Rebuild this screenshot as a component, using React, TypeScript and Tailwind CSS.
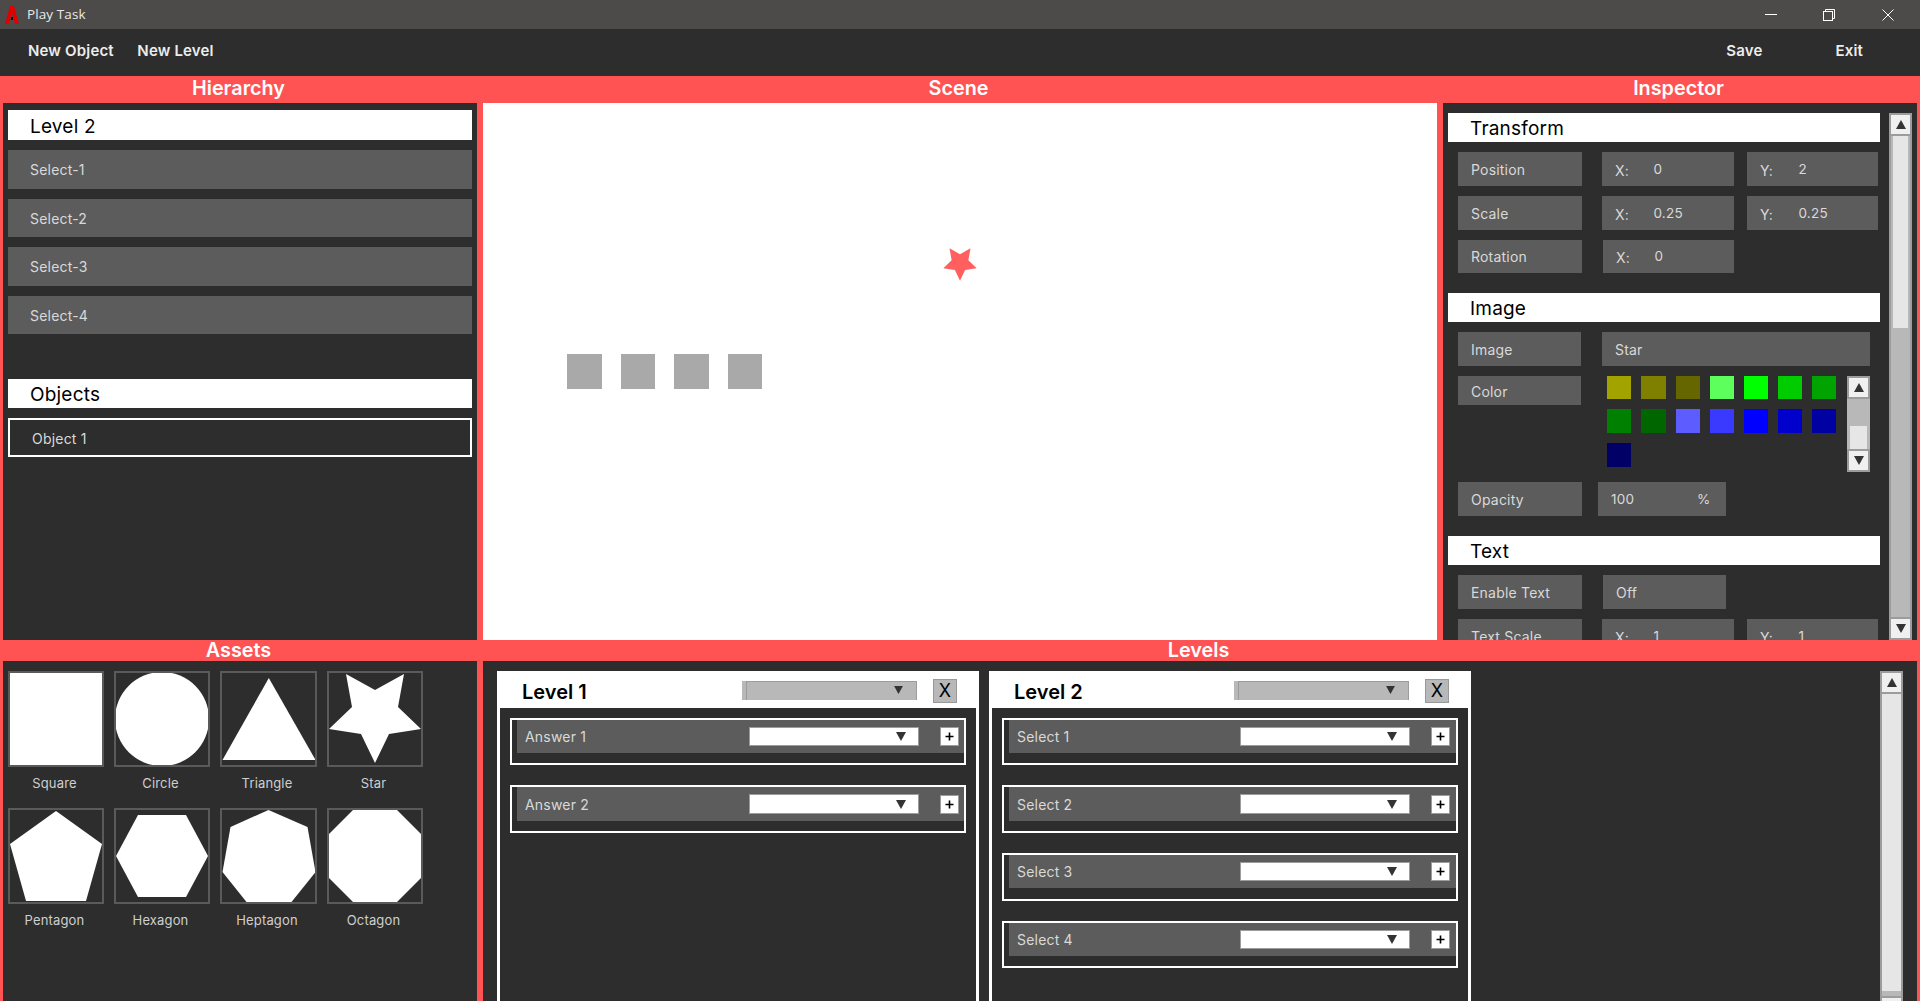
import React from "react";

const font = { fontFamily: "Inter, 'Noto Sans', sans-serif" };

function Tri({ down = false, cls = "" }: { down?: boolean; cls?: string }) {
  return (
    <svg viewBox="0 0 10 9" className={cls}>
      <polygon points={down ? "0,0 10,0 5,9" : "5,0 10,9 0,9"} fill="#333333" />
    </svg>
  );
}

function ScrollBtn({ down = false }: { down?: boolean }) {
  return (
    <div className="w-full h-[23px] shrink-0 bg-[#f0f0f0] border-2 border-[#9c9c9c] flex items-center justify-center">
      <Tri down={down} cls="w-[10px] h-[9px]" />
    </div>
  );
}

function SectionBar({ children, h = "h-[29px]", pl = "pl-[22px]", cls = "", lh = "leading-[32px]" }: { children: React.ReactNode; h?: string; pl?: string; cls?: string; lh?: string }) {
  return (
    <div className={`${h} ${pl} ${cls} ${lh} bg-white text-black text-[19px] tracking-[0.2px]`}>{children}</div>
  );
}

function Cell({ w, h = "h-[34px]", ml = "", children }: { w: string; h?: string; ml?: string; children?: React.ReactNode }) {
  return (
    <div className={`${w} ${h} ${ml} bg-[#5c5c5c] text-[#d9d9d9] text-[14px] flex items-center pl-[13px] shrink-0 tracking-[0.2px]`}>{children}</div>
  );
}

function XY({ a, v, w, ml }: { a: string; v: string; w: string; ml: string }) {
  return (
    <Cell w={w} ml={ml}>
      <span className="w-[38.5px] text-[14px] translate-y-px">{a}</span>
      <span className="text-[13.5px]">{v}</span>
    </Cell>
  );
}

function InspRow({ label, children, mb = "mb-[10px]", h = "h-[34px]", w = "w-[124px]" }: { label: string; children?: React.ReactNode; mb?: string; h?: string; w?: string }) {
  return (
    <div className={`flex ml-[10px] ${mb}`}>
      <Cell w={w} h={h}>{label}</Cell>
      {children}
    </div>
  );
}

const swatches = [
  ["#a3a300", "#808000", "#666600", "#5cff5c", "#00ff00", "#00cc00", "#00a300"],
  ["#008000", "#006600", "#5c5cff", "#3a3aff", "#0000ff", "#0000cc", "#0000a3"],
  ["#000066"],
];

function Hierarchy() {
  return (
    <div className="w-[474px] bg-[#2d2d2d] pt-[7px] px-[5px] flex flex-col text-[14px]">
      <SectionBar h="h-[30px]" lh="leading-[34px]">Level 2</SectionBar>
      <div className="flex flex-col gap-[10px] mt-[10px]">
        {["Select-1", "Select-2", "Select-3", "Select-4"].map((s, i) => (
          <div key={s} className={`${i % 2 === 0 ? "h-[39px]" : "h-[38px]"} bg-[#5c5c5c] text-[#d9d9d9] pl-[22px] flex items-center tracking-[0.2px]`}>{s}</div>
        ))}
      </div>
      <SectionBar cls="mt-[45px]">Objects</SectionBar>
      <div className="mt-[10px] h-[39px] border-2 border-white pl-[22px] pt-[2px] text-[#d9d9d9] flex items-center tracking-[0.2px]">Object 1</div>
    </div>
  );
}

function Scene() {
  return (
    <div className="relative flex-1 bg-white">
      <div className="absolute left-[84px] top-[251px] flex gap-[19.1px]">
        {[0, 1, 2, 3].map((i) => (
          <div key={i} className="w-[34.5px] h-[35px] bg-[#a9a9a9]" />
        ))}
      </div>
      <svg viewBox="0 0 92 91" className="absolute left-[460px] top-[145px] w-[34px] h-[33px]">
        <polygon points="17,1 46,17 75,1 69,34 92,56 60,61 46,90 32,61 0,56 23,34" fill="#ff5f5f" />
      </svg>
    </div>
  );
}

function Inspector() {
  return (
    <div className="w-[474px] h-[537px] overflow-hidden bg-[#2d2d2d] flex pl-[5px] pr-[5px] pt-[10px]">
      <div className="w-[432px] shrink-0 flex flex-col">
        <SectionBar cls="mb-[10px]">Transform</SectionBar>
        <InspRow label="Position">
          <XY a="X:" v="0" w="w-[132px]" ml="ml-[20px]" />
          <XY a="Y:" v="2" w="w-[131px]" ml="ml-[13px]" />
        </InspRow>
        <InspRow label="Scale">
          <XY a="X:" v="0.25" w="w-[132px]" ml="ml-[20px]" />
          <XY a="Y:" v="0.25" w="w-[131px]" ml="ml-[13px]" />
        </InspRow>
        <InspRow label="Rotation" h="h-[33px]" mb="mb-[20px]">
          <Cell w="w-[131px]" h="h-[33px]" ml="ml-[21px]">
            <span className="w-[38.5px] translate-y-px">X:</span>
            <span className="text-[13.5px]">0</span>
          </Cell>
        </InspRow>
        <SectionBar cls="mb-[10px]">Image</SectionBar>
        <InspRow label="Image" w="w-[123px]">
          <Cell w="w-[268px]" ml="ml-[21px]">Star</Cell>
        </InspRow>
        <div className="flex ml-[10px] h-[96px] mb-[10px]">
          <div className="w-[123px] h-[29px] bg-[#5c5c5c] text-[#d9d9d9] text-[14px] pl-[13px] pt-[1px] flex items-center shrink-0 tracking-[0.2px]">Color</div>
          <div className="ml-[26px] w-[229px] shrink-0 flex flex-col gap-[10px]">
            {swatches.map((r, i) => (
              <div key={i} className={`flex gap-[10px] ${i === 0 ? "h-[23px]" : "h-[24px]"}`}>
                {r.map((c, j) => (
                  <div key={c} className={`${j === 1 ? "w-[25px]" : "w-[24px]"} h-full`} style={{ backgroundColor: c }} />
                ))}
              </div>
            ))}
          </div>
          <div className="w-[23px] h-[96px] ml-[11px] flex flex-col bg-[#b8b8b8]">
            <ScrollBtn />
            <div className="flex-1 flex flex-col justify-end px-[3px]">
              <div className="h-[23px] bg-[#e6e6e6]" />
            </div>
            <ScrollBtn down />
          </div>
        </div>
        <InspRow label="Opacity" mb="mb-[20px]">
          <Cell w="w-[128px]" ml="ml-[16px]">
            <span className="text-[13.5px] w-[86px]">100</span>
            <span className="text-[13.5px]">%</span>
          </Cell>
        </InspRow>
        <SectionBar cls="mb-[10px]">Text</SectionBar>
        <InspRow label="Enable Text">
          <Cell w="w-[123px]" ml="ml-[21px]">Off</Cell>
        </InspRow>
        <InspRow label="Text Scale">
          <XY a="X:" v="1" w="w-[132px]" ml="ml-[20px]" />
          <XY a="Y:" v="1" w="w-[131px]" ml="ml-[13px]" />
        </InspRow>
      </div>
      <div className="ml-[9px] w-[23px] h-[527px] flex flex-col bg-[#b8b8b8] border-x-2 border-[#9c9c9c]">
        <div className="-mx-[2px]"><div className="w-[23px]"><ScrollBtn /></div></div>
        <div className="flex-1 px-[2px]">
          <div className="h-[192px] bg-[#e6e6e6]" />
        </div>
        <div className="-mx-[2px]"><div className="w-[23px]"><ScrollBtn down /></div></div>
      </div>
    </div>
  );
}

function Shape({ points, circle }: { points?: string; circle?: boolean }) {
  return (
    <svg viewBox="0 0 92 92" className="w-full h-full block">
      {circle ? <circle cx="46" cy="46" r="47" fill="#fff" /> : <polygon points={points} fill="#fff" />}
    </svg>
  );
}

const assets: { n: string; p?: string; c?: boolean }[] = [
  { n: "Square", p: "0,0 92,0 92,92 0,92" },
  { n: "Circle", c: true },
  { n: "Triangle", p: "46.3,5 93,87 0,87" },
  { n: "Star", p: "17,1 46,17 75,1 69,34 92,56 60,61 46,90 32,61 0,56 23,34" },
  { n: "Pentagon", p: "46,1 92,34 76,91 16,91 0,34" },
  { n: "Hexagon", p: "22,5 70,5 92,46 70,87 22,87 0,46" },
  { n: "Heptagon", p: "46,0 85,17 93,62 69,92 24,92 0,62 8,17" },
  { n: "Octagon", p: "24,0 68,0 92,24 92,68 68,92 24,92 0,68 0,24" },
];

function Assets() {
  return (
    <div className="w-[474px] bg-[#2d2d2d] pt-[10px] pl-[5px]">
      <div className="grid grid-cols-[96px_96px_97px_96px] gap-x-[10px] gap-y-[41px] w-fit">
        {assets.map((a) => (
          <div key={a.n} className="relative h-[96px]">
            <div className="w-full h-full border-2 border-[#5a5a5a]">
              <Shape points={a.p} circle={a.c} />
            </div>
            <div className="absolute left-0 right-[3px] top-[102px] text-center text-[13px] leading-[20px] text-[#cfcfcf] tracking-[0.15px]">{a.n}</div>
          </div>
        ))}
      </div>
    </div>
  );
}

function Plus() {
  return (
    <div className="w-[19px] h-[19px] ml-[21px] shrink-0 bg-white border border-[#9c9c9c] flex items-center justify-center">
      <svg viewBox="0 0 9 9" className="w-[9px] h-[9px]">
        <path d="M4.5 0.5v8M0.5 4.5h8" stroke="#000" strokeWidth="1.6" fill="none" />
      </svg>
    </div>
  );
}

function Card({ title, rows, ml = "", labelW = "w-[224px]" }: { title: string; rows: string[]; ml?: string; labelW?: string }) {
  return (
    <div className={`w-[482px] shrink-0 bg-white px-[3px] flex flex-col ${ml}`}>
      <div className="h-[37px] shrink-0 flex items-start">
        <span className="ml-[22px] mt-[7px] leading-[28px] text-[20px] font-semibold text-black w-[220px] shrink-0">{title}</span>
        <div className="w-[175px] h-[19px] mt-[10px] bg-[#b8b8b8] pl-[4px] flex shrink-0">
          <div className="flex-1 border-l border-t border-r border-[#9c9c9c] flex items-center justify-end pr-[13px]">
            <Tri down cls="w-[9px] h-[8px] -translate-y-px" />
          </div>
        </div>
        <div className="w-[24px] h-[24px] mt-[8px] ml-[16px] shrink-0 bg-[#b8b8b8] border border-[#999999] flex items-center justify-center text-[18px] leading-none text-black">X</div>
      </div>
      <div className="flex-1 bg-[#2d2d2d] pt-[9.8px] px-[10px] flex flex-col gap-[20px]">
        {rows.map((r) => (
          <div key={r} className="h-[47.6px] border-2 border-white pl-[5px] shrink-0">
            <div className="h-[33.5px] bg-[#5c5c5c] flex items-center pl-[8px] text-[14px] text-[#d9d9d9] tracking-[0.2px]">
              <span className={`${labelW} shrink-0`}>{r}</span>
              <div className="w-[170px] h-[19.5px] bg-white border border-[#9c9c9c] flex items-center justify-end shrink-0">
                <Tri down cls="w-[10px] h-[9px] mr-[12px]" />
              </div>
              <Plus />
            </div>
          </div>
        ))}
      </div>
    </div>
  );
}

function Levels() {
  return (
    <div className="flex-1 bg-[#2d2d2d] pt-[10px] pl-[14px] pr-[14px] flex h-[340px] overflow-hidden">
      <Card title="Level 1" rows={["Answer 1", "Answer 2"]} />
      <Card title="Level 2" rows={["Select 1", "Select 2", "Select 3", "Select 4"]} ml="ml-[10px]" labelW="w-[223px]" />
      <div className="ml-auto w-[23px] h-[340px] bg-[#b8b8b8] border-x-2 border-[#9c9c9c] flex flex-col">
        <div className="-mx-[2px]"><div className="w-[23px]"><ScrollBtn /></div></div>
        <div className="h-[297px] bg-[#e6e6e6] shrink-0" />
        <div className="h-[5px] shrink-0" />
        <div className="-mx-[2px]"><div className="w-[23px]"><ScrollBtn down /></div></div>
      </div>
    </div>
  );
}

export default function App() {
  return (
    <div className="w-[1920px] h-[1001px] overflow-hidden bg-[#ff5353] flex flex-col" style={font}>
      <div className="h-[29px] shrink-0 bg-[#4c4b49] flex items-center pl-[5px]">
        <svg viewBox="0 0 14 18" className="w-[14px] h-[18px] shrink-0">
          <polygon points="5,0 9,0 14,18 10,18 7,7 4,18 0,18" fill="#e00000" />
          <rect x="6" y="11" width="2" height="3" fill="#111" />
        </svg>
        <span className="ml-[8px] text-[13.5px] text-[#e8e8e8] tracking-[0.1px]" style={{ fontFamily: "'Open Sans', sans-serif" }}>Play Task</span>
        <div className="ml-auto flex items-center">
          <svg viewBox="0 0 12 12" className="w-[12px] h-[12px]"><path d="M0 5.5h12" stroke="#fff" strokeWidth="1" /></svg>
          <svg viewBox="0 0 12 12" className="w-[12px] h-[12px] ml-[46px]" fill="none" stroke="#fff" strokeWidth="1">
            <rect x="0.5" y="2.5" width="9" height="9" />
            <path d="M2.5 2.5v-2h9v9h-2" />
          </svg>
          <svg viewBox="0 0 12 12" className="w-[12px] h-[12px] ml-[47px] mr-[26px]" fill="none" stroke="#fff" strokeWidth="1">
            <path d="M0.5 0.5l11 11M11.5 0.5l-11 11" />
          </svg>
        </div>
      </div>
      <div className="h-[47px] shrink-0 bg-[#2d2d2d] flex items-center pb-[2px] text-[15px] font-semibold text-[#ececec] tracking-[0.17px]">
        <span className="ml-[28px]">New Object</span>
        <span className="ml-[23.5px]">New Level</span>
        <span className="ml-auto">Save</span>
        <span className="ml-[73px] mr-[57px]">Exit</span>
      </div>
      <div className="h-[27px] shrink-0 flex text-white text-[19.8px] font-semibold leading-[25px] text-center px-[3px] gap-[6px]">
        <div className="w-[474px] pr-[3px]">Hierarchy</div>
        <div className="flex-1 pr-[3px]">Scene</div>
        <div className="w-[474px] pr-[3px]">Inspector</div>
      </div>
      <div className="h-[537px] shrink-0 flex px-[3px] gap-[6px]">
        <Hierarchy />
        <Scene />
        <Inspector />
      </div>
      <div className="h-[21px] shrink-0 flex text-white text-[19.8px] font-semibold leading-[21px] text-center px-[3px] gap-[6px]">
        <div className="w-[474px] pr-[3px]">Assets</div>
        <div className="flex-1 pr-[3px]">Levels</div>
      </div>
      <div className="h-[340px] shrink-0 flex px-[3px] gap-[6px]">
        <Assets />
        <Levels />
      </div>
    </div>
  );
}
